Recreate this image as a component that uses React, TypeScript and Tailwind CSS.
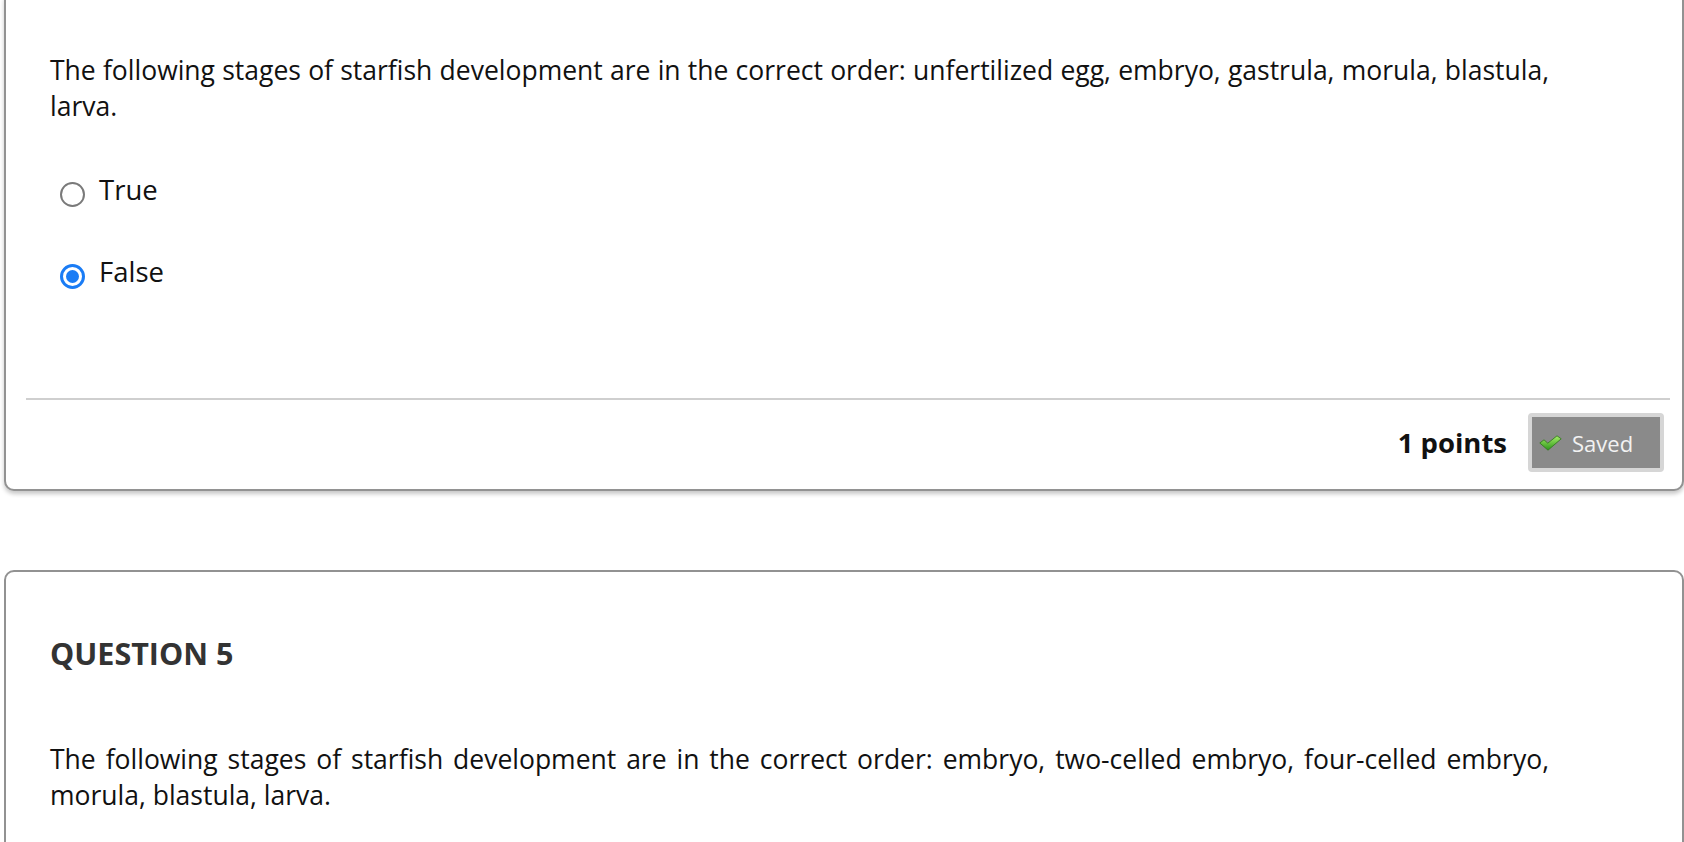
import React from "react";

const font = { fontFamily: '"Open Sans", "Liberation Sans", sans-serif' };

function CheckIcon() {
  return (
    <svg width="23" height="16" viewBox="0 0 23 16">
      <defs>
        <linearGradient id="chk" x1="0" y1="0" x2="0" y2="1">
          <stop offset="0" stopColor="#a8ee6a" />
          <stop offset="1" stopColor="#2a9618" />
        </linearGradient>
      </defs>
      <path
        d="M0.8 8 L5 4.8 L8.8 8.2 L18 0.8 L22.2 3.8 L9 15.2 Z"
        fill="url(#chk)"
        stroke="#357a22"
        strokeWidth="0.9"
        strokeLinejoin="round"
      />
    </svg>
  );
}

function Radio({ checked }: { checked?: boolean }) {
  if (checked) {
    return (
      <div className="mt-[10px] flex h-[25px] w-[25px] shrink-0 items-center justify-center rounded-full border-[3px] border-[#1a7cf5] bg-white">
        <div className="h-[13px] w-[13px] rounded-full bg-[#1a7cf5]" />
      </div>
    );
  }
  return <div className="mt-[10px] h-[25px] w-[25px] shrink-0 rounded-full border-[2px] border-[#7a7a7a] bg-white" />;
}

function Option({ label, checked }: { label: string; checked?: boolean }) {
  return (
    <div className="flex items-start gap-[14px]">
      <Radio checked={checked} />
      <span className="text-[27.5px] leading-[36px] text-[#111]">{label}</span>
    </div>
  );
}

export default function App() {
  return (
    <div className="min-h-screen overflow-hidden bg-white pl-[4px]" style={font}>
      {/* question 4, top cut off */}
      <div className="-mt-[10px] rounded-[10px] border-[2px] border-[#929292] bg-white pt-[60px] pb-[17px] shadow-[0_3px_4px_rgba(0,0,0,0.22)]">
        <p className="pl-[44px] pr-[133px] text-justify text-[26.5px] leading-[36px] text-[#111]">
          The following stages of starfish development are in the correct order: unfertilized egg, embryo, gastrula,
          morula, blastula, larva.
        </p>
        <div className="mt-[48px] flex flex-col gap-[46px] pl-[54px]">
          <Option label="True" />
          <Option label="False" checked />
        </div>
        <div className="mt-[108px] ml-[20px] mr-[12px] h-[2px] bg-[#cfcfcf]" />
        <div className="mt-[13px] mr-[18px] flex items-center justify-end gap-[21px]">
          <span className="text-[27.5px] font-bold leading-[36px] text-[#111]">1 points</span>
          <div className="flex h-[59px] w-[136px] items-center rounded-[4px] border-[4px] border-[#d6d6d6] bg-[#8a8a8a] pl-[7px]">
            <CheckIcon />
            <span className="ml-[10px] text-[22px] leading-[30px] text-[#f2f2f2]">Saved</span>
          </div>
        </div>
      </div>

      {/* question 5 */}
      <div className="mt-[79px] h-[400px] rounded-[10px] border-[2px] border-[#929292] bg-white pt-[61px]">
        <h2 className="pl-[44px] text-[30.5px] font-bold leading-[40px] text-[#333]">QUESTION 5</h2>
        <p className="mt-[68px] pl-[44px] pr-[133px] text-justify text-[26.5px] leading-[36px] text-[#111]">
          The following stages of starfish development are in the correct order: embryo, two-celled embryo,
          four-celled embryo, morula, blastula, larva.
        </p>
      </div>
    </div>
  );
}
